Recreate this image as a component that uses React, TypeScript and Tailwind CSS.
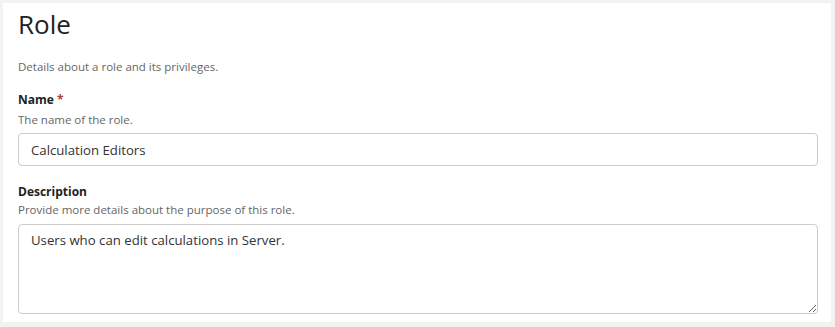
export default function App() {
  const font = { fontFamily: '"Open Sans", "Noto Sans", sans-serif' };
  return (
    <div className="w-[835px] h-[327px] bg-[#f2f2f2] pt-[3px] pl-[3px] pr-[4px] pb-[5px]" style={font}>
      <div className="h-full bg-white pl-[15px] pr-[13px] pt-[3px]">
        <h1 className="text-[26px] leading-[36px] text-[#222]">Role</h1>
        <p className="mt-[17px] text-[11.5px] leading-[16px] text-[#666]">Details about a role and its privileges.</p>
        <div className="mt-[16px]">
          <div className="text-[12px] leading-[17px] font-bold text-[#222]">
            Name <span className="text-[#a94442]">*</span>
          </div>
          <div className="mt-[4px] text-[11.5px] leading-[16px] text-[#666]">The name of the role.</div>
          <input
            readOnly
            value="Calculation Editors"
            className="mt-[5px] block w-full h-[33px] rounded-[4px] border border-[#ccc] px-[12px] text-[13.2px] text-[#333] outline-none"
            style={font}
          />
        </div>
        <div className="mt-[17px]">
          <div className="text-[12px] leading-[17px] font-bold text-[#222]">Description</div>
          <div className="mt-[2px] text-[11.5px] leading-[16px] text-[#666]">Provide more details about the purpose of this role.</div>
          <textarea
            readOnly
            value="Users who can edit calculations in Server."
            className="mt-[6px] block w-full h-[90px] rounded-[4px] border border-[#ccc] px-[12px] pt-[5px] text-[13.2px] leading-[20px] text-[#333] outline-none resize-y"
            style={font}
          />
        </div>
      </div>
    </div>
  );
}
